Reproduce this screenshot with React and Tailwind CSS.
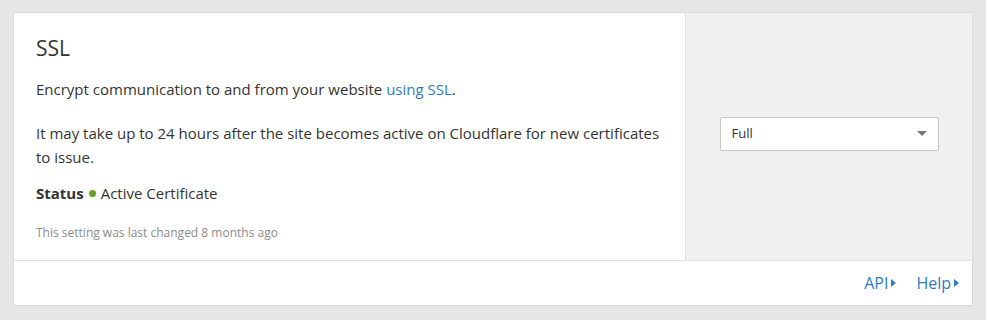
import React from "react"

const Caret = () => (
  <svg className="inline-block ml-[3px]" width="5" height="8" viewBox="0 0 5 8">
    <path d="M0 0 L5 4 L0 8 Z" fill="currentColor" />
  </svg>
)

const App = () => {
  return <div className="min-h-[320px] bg-[#e6e6e6] px-[13px] pt-[12px] text-[#333]" style={{ fontFamily: '"Open Sans", sans-serif' }}>
    <div className="bg-white border border-[#d9d9d9] rounded-[2px] w-[960px]">
      <div className="flex border-b border-[#e0e0e0]">
        <div className="flex-1 pl-[22px] pr-[12px] pt-[20px] pb-[18px]">
          <h3 className="text-[21px] leading-[30px] text-[#333] mb-[15px]">SSL</h3>
          <p className="text-[15px] leading-[22px] mb-[21px]">
            Encrypt communication to and from your website <a className="text-[#2f7bbf]" href="#">using SSL</a>.
          </p>
          <p className="text-[15px] leading-[24px] mb-[13px]">
            It may take up to 24 hours after the site becomes active on Cloudflare for new certificates to issue.
          </p>
          <div className="flex items-center text-[15px] leading-[22px]">
            <span className="font-bold">Status</span>
            <span className="w-[7px] h-[7px] rounded-full bg-[#6a9f2a] mx-[5px]"></span>
            <span>Active Certificate</span>
          </div>
          <p className="text-[12px] text-[#8c8c8c] mt-[20px] leading-[18px]">This setting was last changed 8 months ago</p>
        </div>
        <div className="w-[287px] bg-[#f0f0f0] border-l border-[#e0e0e0] flex items-center justify-center pb-[6px]">
          <div className="w-[219px] h-[34px] bg-white border border-[#c7c7c7] rounded-[2px] flex items-center justify-between pl-[11px] pr-[11px]">
            <span className="text-[13px] text-[#333]">Full</span>
            <svg width="10" height="5" viewBox="0 0 10 5"><path d="M0 0 H10 L5 5 Z" fill="#777" /></svg>
          </div>
        </div>
      </div>
      <div className="h-[44px] flex items-center justify-end gap-[20px] pr-[13px] text-[16px] text-[#2f7bbf]">
        <a href="#" className="flex items-center">API<Caret /></a>
        <a href="#" className="flex items-center">Help<Caret /></a>
      </div>
    </div>
  </div>
}

export default App
